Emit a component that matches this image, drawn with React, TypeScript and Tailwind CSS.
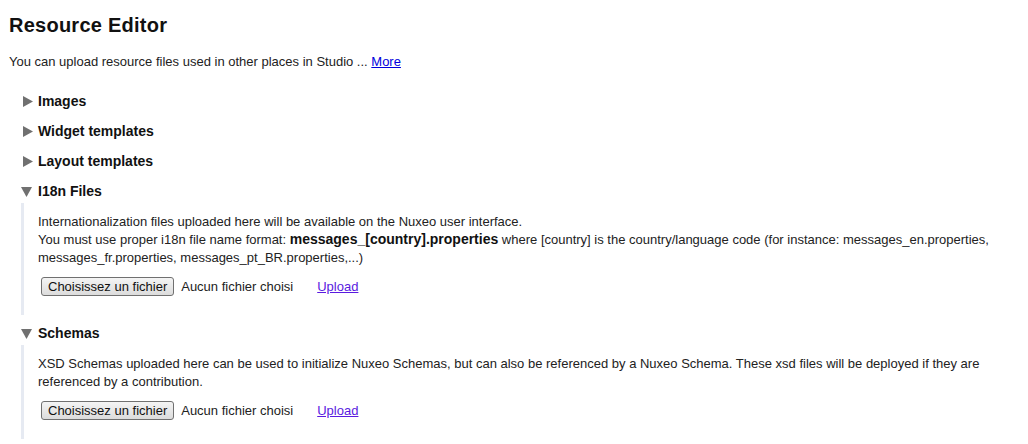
import React from 'react';

const font = { fontFamily: '"Liberation Sans", Arial, sans-serif' };

const Arrow: React.FC<{ open?: boolean }> = ({ open }) => (
  <svg width="11" height="11" viewBox="0 0 11 11" className="shrink-0">
    {open ? <polygon points="0,1 11,1 5.5,11" fill="#707070" /> : <polygon points="1,0 11,5.5 1,11" fill="#707070" />}
  </svg>
);

const Header: React.FC<{ title: string; open?: boolean; first?: boolean }> = ({ title, open, first }) => (
  <div className={`${first ? 'mt-[18px]' : 'mt-[6px]'} h-[24px] flex items-center ${open ? 'pl-[12px]' : 'pl-[13px]'} ${open ? 'gap-[6px]' : 'gap-[5px]'}`}>
    <Arrow open={open} />
    <span className="text-[14px] font-bold text-[#111]">{title}</span>
  </div>
);

const FileRow: React.FC = () => (
  <div className="mt-[10px] flex items-center h-[19px] pl-[3px] text-[13px] text-[#222]">
    <button className="h-[19px] px-[6px] border border-[#707070] rounded-[3px] bg-gradient-to-b from-[#f4f4f4] to-[#dcdcdc] text-[13px] leading-[17px] text-[#111]">
      Choisissez un fichier
    </button>
    <span className="ml-[7px]">Aucun fichier choisi</span>
    <a href="#" className="ml-[24px] text-[#5a1ae0] underline">Upload</a>
  </div>
);

export default function App() {
  return (
    <div style={font} className="bg-white w-[1028px] h-[444px] overflow-hidden pt-[13px] px-[9px] text-[#222]">
      <h1 className="text-[20px] leading-[24px] font-bold tracking-[0.25px] text-[#111]">Resource Editor</h1>
      <p className="mt-[16px] text-[13px] leading-[18px]">
        You can upload resource files used in other places in Studio ... <a href="#" className="text-[#0000dd] underline">More</a>
      </p>

      <Header title="Images" first />
      <Header title="Widget templates" />
      <Header title="Layout templates" />
      <Header title="I18n Files" open />
      <div className="ml-[12px] border-l-[3px] border-[#e6eaf2] pl-[14px] pt-[10px] pb-[19px]">
        <div className="text-[13px] leading-[18px] pr-[20px]">
          Internationalization files uploaded here will be available on the Nuxeo user interface.
          <br />
          You must use proper i18n file name format: <b className="text-[14px] leading-none text-[#111]">messages_[country].properties</b> where [country] is the country/language code (for instance: messages_en.properties, messages_fr.properties, messages_pt_BR.properties,...)
        </div>
        <FileRow />
      </div>

      <Header title="Schemas" open />
      <div className="ml-[12px] border-l-[3px] border-[#e6eaf2] pl-[14px] pt-[10px] pb-[19px]">
        <div className="text-[13px] leading-[18px] pr-[20px]">
          XSD Schemas uploaded here can be used to initialize Nuxeo Schemas, but can also be referenced by a Nuxeo Schema. These xsd files will be deployed if they are referenced by a contribution.
        </div>
        <FileRow />
      </div>
    </div>
  );
}
